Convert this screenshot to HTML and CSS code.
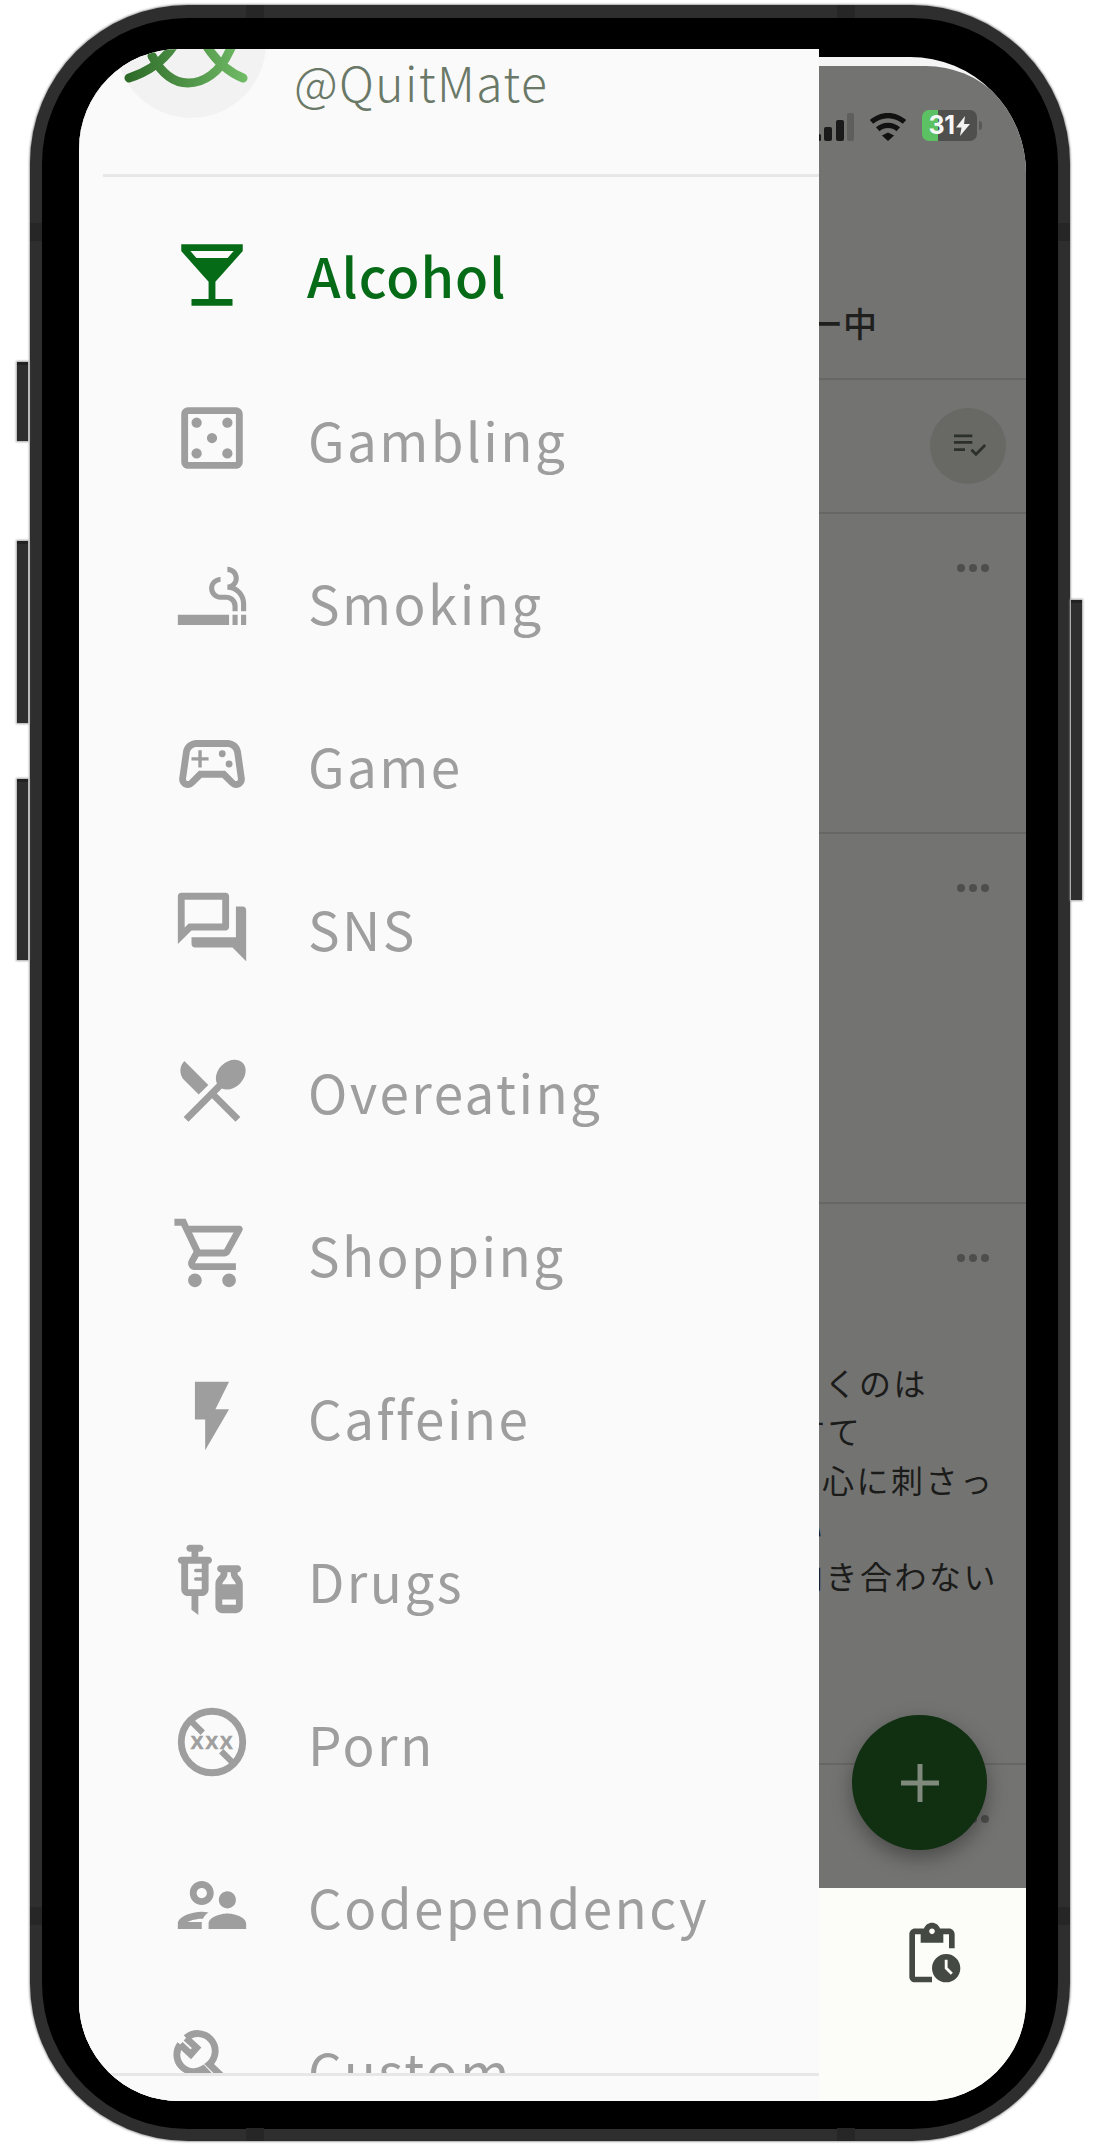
FILE: index.html
```html
<!DOCTYPE html>
<html lang="ja">
<head>
<meta charset="utf-8">
<title>QuitMate</title>
<link rel="stylesheet" href="styles.css">
</head>
<body>
<div class="device">
  <span class="side-btn side-a"></span>
  <span class="side-btn side-b"></span>
  <span class="side-btn side-c"></span>
  <span class="side-btn side-d"></span>
  <span class="band band-t1"></span><span class="band band-t2"></span>
  <span class="band band-b1"></span><span class="band band-b2"></span>
  <span class="band band-l1"></span><span class="band band-l2"></span>
  <span class="band band-r1"></span><span class="band band-r2"></span>
  <div class="bezel">
    <div class="screen">
      <div class="app">
        <div class="main">
          <div class="status">
            <svg class="signal" viewBox="0 0 36 28"><rect x="0" y="21" width="3" height="7" rx="1.5" fill="#1a1a1a"/><rect x="6" y="14" width="8" height="14" rx="2" fill="#1a1a1a"/><rect x="18" y="7" width="8" height="21" rx="2" fill="#1a1a1a"/><rect x="29" y="0" width="7" height="28" rx="2" fill="#5e5e5d"/></svg>
            <svg class="wifi" viewBox="0 0 40 30"><path fill="#111" d="M20 0C12.500 0 5.700 2.900.5 7.600l3.700 4C8.400 7.900 14 5.700 20 5.700s11.600 2.200 15.800 5.900l3.700-4C34.300 2.900 27.500 0 20 0zM20 10.500c-4.900 0-9.400 1.800-12.900 4.900l3.800 4.100c2.400-2.100 5.600-3.400 9.100-3.400s6.700 1.300 9.100 3.400l3.800-4.100c-3.500-3.100-8-4.900-12.900-4.900zM20 21l-6.500 3L20 30l6.500-6z"/></svg>
            <div class="battery">
              <div class="battery-body"><span class="battery-num">31</span><svg class="battery-bolt" viewBox="0 0 14 20"><path fill="#f3f3f3" d="M9 0 0 11.500h5.500L4 20l10-12H8z"/></svg></div>
              <span class="battery-nub"></span>
            </div>
          </div>
          <div class="tabs"><span class="tab-label">ー中</span></div>
          <div class="filter-row">
            <div class="filter-btn">
              <svg class="filter-icon" viewBox="0 0 36 26"><path fill="none" stroke="#2b302a" stroke-width="3" d="M0 2h20M0 9h20M0 17h12"/><path fill="none" stroke="#2b302a" stroke-width="3" d="M19 17l5 5 10-10"/></svg>
            </div>
          </div>
          <div class="post post-a"><div class="dots"><i></i><i></i><i></i></div></div>
          <div class="post post-b"><div class="dots"><i></i><i></i><i></i></div></div>
          <div class="post post-c">
            <div class="dots"><i></i><i></i><i></i></div>
            <div class="post-text">
              <div class="line line-a">さくのは</div>
              <div class="line line-b">すて</div>
              <div class="line line-c">心に刺さっ</div>
              <div class="line line-d">い</div>
              <div class="line line-e">向き合わない</div>
            </div>
          </div>
          <div class="post post-d"><div class="dots"><i></i><i></i><i></i></div></div>
          <div class="fab"><svg class="fab-plus" viewBox="0 0 38 38"><path fill="none" stroke="#7f8a7d" stroke-width="5" d="M19 0v38M0 19h38"/></svg></div>
        </div>
        <nav class="bottom-nav">
          <svg class="nav-icon" viewBox="0 0 24 24"><path fill="#444a43" d="M17 12c-2.760 0-5 2.240-5 5s2.240 5 5 5 5-2.240 5-5-2.240-5-5-5zm1.650 7.350L16.500 17.200V14h1v2.790l1.850 1.850-.7.710zM18 3h-3.180C14.400 1.840 13.300 1 12 1s-2.400.840-2.820 2H6c-1.100 0-2 .9-2 2v15c0 1.100.9 2 2 2h6v-2H6V5h2v3h8V5h2v5h2V5c0-1.100-.9-2-2-2zm-6 2c-.55 0-1-.45-1-1s.45-1 1-1 1 .45 1 1-.45 1-1 1z"/></svg>
        </nav>
      </div>

      <aside class="drawer">
        <header class="drawer-head">
          <div class="avatar">
            <svg class="logo" viewBox="0 0 150 150">
              <defs><linearGradient id="lg" gradientUnits="userSpaceOnUse" x1="10" x2="130" y1="0" y2="0"><stop offset="0" stop-color="#2d6a28"/><stop offset="1" stop-color="#70bb66"/></linearGradient></defs>
              <path fill="none" stroke="url(#lg)" stroke-width="9" stroke-linecap="round" d="M13 110C32 104 48 94 60 74M127 110C112 104 100 94 88 74M36 88C46 106 58 115 72 115C88 115 104 104 113 84L120 70"/>
            </svg>
          </div>
          <div class="handle">@QuitMate</div>
        </header>
        <ul class="menu">
          <li class="item active">
            <svg class="ico" viewBox="0 0 24 24"><path d="M21 5V3H3v2l8 9v5H6v2h12v-2h-5v-5l8-9zM7.430 7L5.660 5h12.690l-1.780 2H7.430z"/></svg>
            <span class="label">Alcohol</span>
          </li>
          <li class="item">
            <svg class="ico" viewBox="0 0 24 24"><path d="M19 3H5c-1.100 0-2 .9-2 2v14c0 1.100.9 2 2 2h14c1.100 0 2-.9 2-2V5c0-1.100-.9-2-2-2zm0 16H5V5h14v14z"/><circle cx="7.500" cy="7.500" r="1.500"/><circle cx="16.500" cy="16.500" r="1.500"/><circle cx="7.500" cy="16.500" r="1.500"/><circle cx="16.500" cy="7.500" r="1.500"/><circle cx="12" cy="12" r="1.500"/></svg>
            <span class="label">Gambling</span>
          </li>
          <li class="item">
            <svg class="ico" viewBox="0 0 24 24"><path d="M2 16h15v3H2v-3zm18.500 0H22v3h-1.500v-3zM18 16h1.500v3H18v-3zm.85-8.270c.62-.61 1-1.450 1-2.380C19.850 3.500 18.350 2 16.500 2v1.500c1.020 0 1.850.83 1.850 1.850S17.520 7.200 16.500 7.200v1.500c2.240 0 4 1.830 4 4.070V15H22v-2.240c0-2.220-1.280-4.140-3.150-5.030zm-2.820 2.470H14.500c-1.020 0-1.850-.98-1.850-2s.83-1.750 1.850-1.750v-1.500c-1.850 0-3.350 1.500-3.350 3.350s1.500 3.350 3.350 3.350h1.530c1.050 0 1.970.74 1.970 2.050V15h1.500v-1.640c0-1.810-1.600-3.160-3.470-3.160z"/></svg>
            <span class="label">Smoking</span>
          </li>
          <li class="item">
            <svg class="ico" viewBox="0 0 24 24"><path d="M21.580 16.090l-1.090-7.660C20.210 6.460 18.520 5 16.530 5H7.470C5.480 5 3.790 6.460 3.510 8.430l-1.090 7.660C2.200 17.630 3.390 19 4.940 19c.68 0 1.320-.27 1.800-.75L9 16h6l2.250 2.250c.48.48 1.130.75 1.800.75 1.560 0 2.750-1.370 2.530-2.910zm-2.100.72c-.08.09-.21.19-.42.19-.15 0-.29-.06-.39-.16L15.830 14H8.170l-2.840 2.840c-.1.1-.24.16-.39.16-.21 0-.34-.1-.42-.19-.08-.09-.16-.23-.13-.44l1.090-7.660C5.630 7.740 6.480 7 7.470 7h9.060c.99 0 1.840.74 1.980 1.720l1.090 7.660c.03.2-.05.34-.12.43zM9 8H8v2H6v1h2v2h1v-2h2v-1H9V8z"/><circle cx="17" cy="12" r="1"/><circle cx="15" cy="9" r="1"/></svg>
            <span class="label">Game</span>
          </li>
          <li class="item">
            <svg class="ico" viewBox="0 0 24 24"><path d="M15 4v7H5.170L4 12.170V4h11m1-2H3c-.55 0-1 .45-1 1v14l4-4h10c.55 0 1-.45 1-1V3c0-.55-.45-1-1-1zm5 4h-2v9H6v2c0 .55.45 1 1 1h11l4 4V7c0-.55-.45-1-1-1z"/></svg>
            <span class="label">SNS</span>
          </li>
          <li class="item">
            <svg class="ico" viewBox="0 0 24 24"><path d="M8.100 13.340l2.830-2.830L3.910 3.500c-1.560 1.560-1.560 4.090 0 5.660l4.190 4.180zm6.780-1.810c1.530.71 3.680.21 5.270-1.380 1.910-1.910 2.280-4.650.81-6.120-1.460-1.460-4.200-1.100-6.120.81-1.590 1.590-2.090 3.740-1.380 5.270L3.700 19.870l1.410 1.410L12 14.410l6.880 6.880 1.410-1.410L13.410 13l1.470-1.470z"/></svg>
            <span class="label">Overeating</span>
          </li>
          <li class="item">
            <svg class="ico" viewBox="0 0 24 24"><path d="M15.550 13c.75 0 1.410-.41 1.750-1.030l3.580-6.490c.37-.66-.11-1.480-.87-1.480H5.210l-.94-2H1v2h2l3.600 7.590-1.350 2.440C4.520 15.370 5.480 17 7 17h12v-2H7l1.100-2h7.450zM6.160 6h12.150l-2.760 5H8.530L6.160 6zM7 18c-1.100 0-1.990.9-1.990 2S5.900 22 7 22s2-.9 2-2-.9-2-2-2zm10 0c-1.100 0-1.990.9-1.990 2s.89 2 1.990 2 2-.9 2-2-.9-2-2-2z"/></svg>
            <span class="label">Shopping</span>
          </li>
          <li class="item">
            <svg class="ico" viewBox="0 0 24 24"><path d="M7 2v11h3v9l7-12h-4l4-8z"/></svg>
            <span class="label">Caffeine</span>
          </li>
          <li class="item">
            <svg class="ico" viewBox="0 0 24 24"><path d="M11 5.500H8V4h.5c.55 0 1-.45 1-1s-.45-1-1-1h-3c-.55 0-1 .45-1 1s.45 1 1 1H6v1.500H3c-.55 0-1 .45-1 1s.45 1 1 1V15c0 1.100.9 2 2 2h1v4l2 1.500V17h1c1.100 0 2-.9 2-2V7.500c.55 0 1-.45 1-1s-.45-1-1-1zM9 9H7.250c-.28 0-.5.22-.5.5s.22.5.5.5H9v1.500H7.250c-.28 0-.5.22-.5.5s.22.5.5.5H9V15H5V7.500h4V9z"/><path fill-rule="evenodd" d="M19.500 10.500V10c.55 0 1-.45 1-1s-.45-1-1-1h-5c-.55 0-1 .45-1 1s.45 1 1 1v.5c0 .5-1.500 1.160-1.500 3V20c0 1.100.9 2 2 2h4c1.100 0 2-.9 2-2v-6.500c0-1.840-1.500-2.500-1.500-3zM16.500 10h1v.5c0 1.300 1.300 2 1.500 3h-4c.2-1 1.500-1.700 1.500-3zM15 18h4v1.500h-4z"/></svg>
            <span class="label">Drugs</span>
          </li>
          <li class="item">
            <svg class="ico" viewBox="0 0 24 24">
              <circle class="ring" cx="12" cy="12" r="9"/>
              <path class="slash" d="M5.800 5.800L9.300 9.300M14.700 14.700L18.200 18.200"/>
              <text class="xxx" x="12.200" y="14">XXX</text>
            </svg>
            <span class="label">Porn</span>
          </li>
          <li class="item">
            <svg class="ico" viewBox="0 0 24 24"><path d="M9 12c1.930 0 3.500-1.570 3.500-3.500S10.930 5 9 5 5.500 6.570 5.500 8.500 7.070 12 9 12zm0-5c.83 0 1.500.67 1.500 1.500S9.830 10 9 10s-1.500-.67-1.500-1.500S8.170 7 9 7zm.05 10H4.770c.99-.5 2.700-1 4.230-1 .11 0 .23.01.34.01.34-.73.93-1.330 1.640-1.810-.73-.13-1.420-.2-1.980-.2-2.340 0-7 1.170-7 3.500V19h7v-1.500c0-.17.02-.34.05-.5zm7.450-2.500c-1.840 0-5.500 1.010-5.500 3V19h11v-1.500c0-1.990-3.660-3-5.500-3zm1.210-1.820c.76-.43 1.290-1.240 1.290-2.180C19 9.120 17.880 8 16.500 8S14 9.120 14 10.500c0 .94.53 1.750 1.290 2.180.36.2.77.32 1.210.32s.85-.12 1.210-.32z"/></svg>
            <span class="label">Codependency</span>
          </li>
          <li class="item">
            <svg class="ico" viewBox="0 0 24 24"><path class="wrench" d="M4.400 2.900A5 5 0 0 1 11.200 10.600L21 20M2.700 4.800A5 5 0 0 0 9.400 12L18 21M4.400 2.900L7.500 5.800L5.800 7.700L2.700 4.800"/></svg>
            <span class="label">Custom</span>
          </li>
        </ul>
        <div class="drawer-foot"></div>
      </aside>
    </div>
  </div>
</div>
</body>
</html>
```
FILE: styles.css
```css
* { box-sizing: border-box; }
html, body { margin: 0; padding: 0; }
body {
  width: 1100px;
  height: 2148px;
  overflow: hidden;
  background: #fff;
  font-family: "Noto Sans CJK JP", "Noto Sans", sans-serif;
  padding: 5px 30px 7px;
}

/* device frame */
.device {
  position: relative;
  width: 1040px;
  height: 2136px;
  border-radius: 158px;
  background: #2e2e2e;
  padding: 13px 12px 12px;
  box-shadow: 0 0 2px 1px #a6a6a6;
}
.bezel {
  height: 100%;
  border-radius: 146px;
  background: #000;
  padding: 31px 32px 28px 37px;
}
.screen {
  position: relative;
  height: 100%;
  border-radius: 100px;
  overflow: hidden;
  background: #000;
}
.side-btn {
  position: absolute;
  width: 11px;
  background: #2e2e2e;
  box-shadow: 0 0 2px 1px #a6a6a6;
  border-top: 3px solid #222;
}
.side-a { left: -13px; top: 357px; height: 79px; }
.side-b { left: -13px; top: 536px; height: 182px; }
.side-c { left: -13px; top: 774px; height: 181px; }
.side-d { right: -12px; top: 595px; height: 300px; }
.band { position: absolute; background: #262626; }
.band-t1, .band-t2, .band-b1, .band-b2 { width: 18px; height: 13px; }
.band-l1, .band-l2, .band-r1, .band-r2 { width: 12px; height: 18px; }
.band-t1 { left: 216px; top: 0; }
.band-t2 { left: 807px; top: 0; }
.band-b1 { left: 216px; bottom: 0; }
.band-b2 { left: 807px; bottom: 0; }
.band-l1 { left: 0; top: 218px; }
.band-l2 { left: 0; top: 1902px; }
.band-r1 { right: 0; top: 218px; }
.band-r2 { right: 0; top: 1902px; }

/* app behind the drawer */
.app {
  height: calc(100% - 8px);
  margin-top: 8px;
  display: flex;
  flex-direction: column;
  background: #f5f5f5;
  border-top-right-radius: 116px;
  overflow: hidden;
  padding-top: 9px;
}
.main {
  position: relative;
  flex: 1;
  background: #737372;
  border-top-right-radius: 100px;
  display: flex;
  flex-direction: column;
}
.status {
  height: 80px;
  display: flex;
  justify-content: flex-end;
  align-items: flex-end;
  gap: 14px;
  padding: 0 44px 5px 0;
}
.signal { width: 36px; height: 28px; }
.wifi { width: 40px; height: 28px; }
.battery { display: flex; align-items: center; gap: 2px; }
.battery-body {
  width: 55px;
  height: 31px;
  border-radius: 7px;
  background: linear-gradient(90deg, #5cc163 0, #5cc163 16px, #4f4f4e 16px);
  display: flex;
  align-items: center;
  justify-content: center;
  gap: 2px;
}
.battery-num {
  font-family: "Inter", "Noto Sans", sans-serif;
  font-weight: 700;
  font-size: 25px;
  line-height: 31px;
  color: #f7f7f7;
  letter-spacing: -0.5px;
}
.battery-bolt { width: 14px; height: 20px; }
.battery-nub { width: 3px; height: 9px; background: #595958; border-radius: 0 3px 3px 0; }
.tabs {
  height: 234px;
  border-bottom: 2px solid #666764;
  display: flex;
  align-items: flex-end;
  padding: 0 0 30px 730px;
}
.tab-label {
  font-size: 34px;
  line-height: 50px;
  font-weight: 500;
  color: #1f201e;
}
.filter-row {
  height: 134px;
  border-bottom: 2px solid #666764;
  display: flex;
  justify-content: flex-end;
  align-items: center;
  padding-right: 20px;
}
.filter-btn {
  width: 76px;
  height: 76px;
  border-radius: 50%;
  background: #686964;
  display: flex;
  align-items: center;
  justify-content: center;
  padding-left: 4px;
}
.filter-icon { width: 33px; height: 24px; }
.post { border-bottom: 2px solid #666764; padding: 50px 37px 0 0; }
.post-a { height: 320px; }
.post-b { height: 370px; }
.post-c { height: 561px; }
.post-d { flex: 1; border-bottom: 0; }
.dots { display: flex; justify-content: flex-end; gap: 4px; height: 8px; }
.dots i { width: 8px; height: 8px; border-radius: 50%; background: #4e4e4c; }
.post-text {
  margin-top: 96px;
  font-size: 32px;
  line-height: 48.300px;
  letter-spacing: 2.500px;
  font-weight: 400;
  color: #1b1c1a;
  white-space: nowrap;
}
.line-a { padding-left: 711px; }
.line-b { padding-left: 714px; }
.line-c { padding-left: 743px; }
.line-d { padding-left: 712px; }
.line-e { padding-left: 712px; }
.fab {
  position: absolute;
  right: 39px;
  bottom: 38px;
  width: 135px;
  height: 135px;
  border-radius: 50%;
  background: #112f11;
  box-shadow: 0 8px 20px rgba(0, 0, 0, .35);
  display: flex;
  align-items: center;
  justify-content: center;
}
.fab-plus { width: 38px; height: 38px; }
.bottom-nav {
  height: 213px;
  background: #fcfdf8;
  display: flex;
  justify-content: flex-end;
  align-items: flex-start;
  padding: 32px 60px 0 0;
}
.nav-icon { width: 68px; height: 68px; }

/* drawer */
.drawer {
  position: absolute;
  left: 0;
  top: 0;
  bottom: 0;
  width: 740px;
  background: #fafafa;
  display: flex;
  flex-direction: column;
}
.drawer-head {
  height: 128px;
  flex: none;
  margin-left: 24px;
  border-bottom: 3px solid #e7e7e7;
  display: flex;
  align-items: flex-start;
  padding-left: 13px;
}
.avatar {
  flex: none;
  width: 150px;
  height: 150px;
  margin-top: -81px;
  border-radius: 50%;
  background: #f2f2f2;
}
.logo { display: block; width: 150px; height: 150px; }
.handle {
  margin-left: 28px;
  font-size: 48px;
  line-height: 60px;
  font-weight: 300;
  letter-spacing: 1.400px;
  color: #6a7867;
  margin-top: 2px;
}
.menu {
  flex: 1;
  min-height: 0;
  overflow: hidden;
  margin: 0;
  padding: 16px 0 0 92px;
  list-style: none;
}
.item {
  height: 163.100px;
  display: flex;
  align-items: center;
  gap: 55px;
  color: #9e9e9e;
  fill: #9e9e9e;
}
.ico { flex: none; width: 82px; height: 82px; }
.label {
  font-size: 53px;
  line-height: 70px;
  font-weight: 400;
  letter-spacing: 2.400px;
  padding-top: 2px;
}
.item.active { color: #056b17; fill: #056b17; }
.item.active .label { font-size: 54px; font-weight: 500; letter-spacing: 1px; margin-left: -1px; padding-top: 0; }
.ring { fill: none; stroke: #9e9e9e; stroke-width: 2; }
.slash { fill: none; stroke: #9e9e9e; stroke-width: 1.800; }
.xxx {
  font-family: "Liberation Sans", sans-serif;
  font-weight: 700;
  font-size: 5.500px;
  letter-spacing: .6px;
  text-anchor: middle;
  fill: #9e9e9e;
  stroke: #9e9e9e;
  stroke-width: .2;
}
.wrench { fill: none; stroke: #9e9e9e; stroke-width: 2; }
.drawer-foot { height: 28px; flex: none; border-top: 3px solid #e7e7e7; }
```
